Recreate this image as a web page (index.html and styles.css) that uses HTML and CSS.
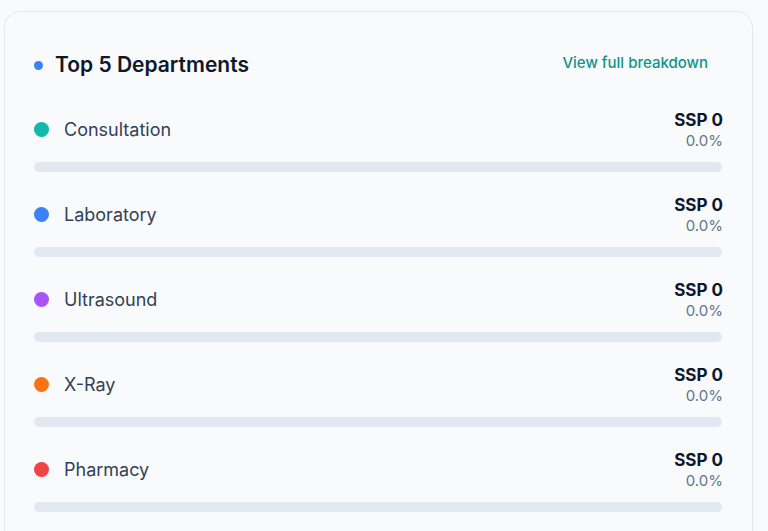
FILE: index.html
```html
<!DOCTYPE html>
<html lang="en">
<head>
<meta charset="utf-8">
<title>Top 5 Departments</title>
<link rel="stylesheet" href="styles.css">
</head>
<body>
<div class="page">
  <section class="card">
    <header class="card-header">
      <h2 class="title"><span class="title-dot"></span>Top 5 Departments</h2>
      <a class="link" href="#">View full breakdown</a>
    </header>
    <div class="rows">
      <div class="row">
        <div class="row-top">
          <div class="name"><span class="dot teal"></span>Consultation</div>
          <div class="amount"><div class="ssp">SSP 0</div><div class="pct">0.0%</div></div>
        </div>
        <div class="bar"><div class="fill teal" style="width:0%"></div></div>
      </div>
      <div class="row">
        <div class="row-top">
          <div class="name"><span class="dot blue"></span>Laboratory</div>
          <div class="amount"><div class="ssp">SSP 0</div><div class="pct">0.0%</div></div>
        </div>
        <div class="bar"><div class="fill blue" style="width:0%"></div></div>
      </div>
      <div class="row">
        <div class="row-top">
          <div class="name"><span class="dot purple"></span>Ultrasound</div>
          <div class="amount"><div class="ssp">SSP 0</div><div class="pct">0.0%</div></div>
        </div>
        <div class="bar"><div class="fill purple" style="width:0%"></div></div>
      </div>
      <div class="row">
        <div class="row-top">
          <div class="name"><span class="dot orange"></span>X-Ray</div>
          <div class="amount"><div class="ssp">SSP 0</div><div class="pct">0.0%</div></div>
        </div>
        <div class="bar"><div class="fill orange" style="width:0%"></div></div>
      </div>
      <div class="row">
        <div class="row-top">
          <div class="name"><span class="dot red"></span>Pharmacy</div>
          <div class="amount"><div class="ssp">SSP 0</div><div class="pct">0.0%</div></div>
        </div>
        <div class="bar"><div class="fill red" style="width:0%"></div></div>
      </div>
    </div>
  </section>
</div>
</body>
</html>
```

FILE: styles.css
```css
* { box-sizing: border-box; }
html, body { margin: 0; padding: 0; }
body {
  background: #f9fafb;
  font-family: Inter, "Noto Sans", sans-serif;
  overflow: hidden;
  height: 531px;
}
.page {
  padding: 11px 15px 0 4px;
}
.card {
  background: #f8fafc;
  border: 1px solid #e2e8f0;
  border-radius: 16px;
  padding: 38px 30px 40px 29px;
  min-height: 600px;
}
.card-header {
  display: flex;
  align-items: flex-start;
  justify-content: space-between;
  padding-right: 14px;
}
.title {
  display: flex;
  align-items: center;
  gap: 12px;
  margin: 1px 0 0;
  font-size: 21px;
  line-height: 28px;
  font-weight: 600;
  color: #0f172a;
}
.title-dot {
  width: 9px;
  height: 9px;
  border-radius: 50%;
  background: #3b82f6;
}
.link {
  font-size: 15px;
  line-height: 24px;
  font-weight: 500;
  color: #0d9488;
  text-decoration: none;
  margin-top: 1px;
}
.rows {
  display: flex;
  flex-direction: column;
  gap: 22px;
  margin-top: 30px;
}
.row-top {
  display: flex;
  align-items: center;
  justify-content: space-between;
}
.name {
  display: flex;
  align-items: center;
  gap: 15px;
  font-size: 18px;
  color: #334155;
  font-weight: 400;
  margin-bottom: 2px;
}
.dot {
  width: 15px;
  height: 15px;
  border-radius: 50%;
}
.amount { text-align: right; margin-right: -1px; }
.ssp {
  font-size: 17px;
  line-height: 22px;
  font-weight: 700;
  color: #0f172a;
}
.pct {
  font-size: 15px;
  line-height: 20px;
  color: #64748b;
}
.bar {
  margin-top: 11px;
  height: 10px;
  border-radius: 5px;
  background: #e2e8f0;
  overflow: hidden;
}
.fill { height: 100%; }
.teal { background: #14b8a6; }
.blue { background: #3b82f6; }
.purple { background: #a855f7; }
.orange { background: #f97316; }
.red { background: #ef4444; }
```
